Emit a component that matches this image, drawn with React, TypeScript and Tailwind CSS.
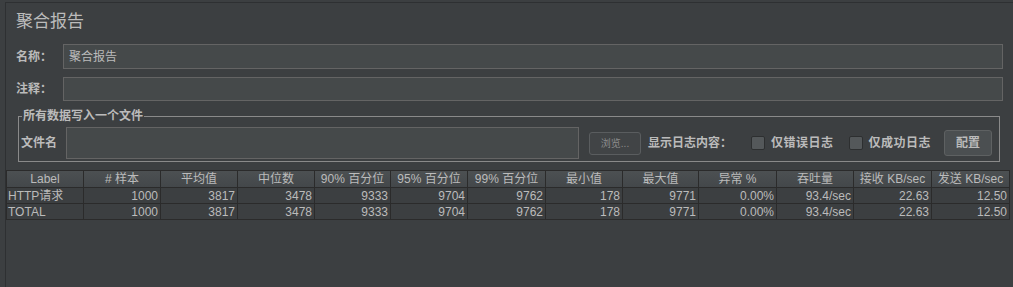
import React from 'react';

const cols = [
  { label: 'Label', w: 77 },
  { label: '# 样本', w: 77 },
  { label: '平均值', w: 77 },
  { label: '中位数', w: 77 },
  { label: '90% 百分位', w: 76 },
  { label: '95% 百分位', w: 77 },
  { label: '99% 百分位', w: 78 },
  { label: '最小值', w: 77 },
  { label: '最大值', w: 76 },
  { label: '异常 %', w: 78 },
  { label: '吞吐量', w: 77 },
  { label: '接收 KB/sec', w: 78 },
  { label: '发送 KB/sec', w: 78 },
];

const rows = [
  ['HTTP请求', '1000', '3817', '3478', '9333', '9704', '9762', '178', '9771', '0.00%', '93.4/sec', '22.63', '12.50'],
  ['TOTAL', '1000', '3817', '3478', '9333', '9704', '9762', '178', '9771', '0.00%', '93.4/sec', '22.63', '12.50'],
];

const font = { fontFamily: '"Liberation Sans", "Noto Sans CJK SC", sans-serif' };

const Checkbox: React.FC<{ label: string }> = ({ label }) => (
  <label className="flex items-center gap-[6px] text-[12px] font-bold text-[#bbbbbb] tracking-[0.5px]">
    <span className="w-[14px] h-[14px] rounded-[2px] border border-[#2d2f30] bg-[#54585a]" />
    {label}
  </label>
);

const App: React.FC = () => {
  return (
    <div className="w-[1013px] h-[287px] bg-[#3c3f41] overflow-hidden pt-[2px] pl-[5px]" style={font}>
      <div className="h-full flex flex-col border-l border-t border-[#2e3032]">
        <div className="mt-[9px] pl-[10px] text-[17px] leading-[20px] text-[#bbbbbb]">聚合报告</div>

        <div className="mt-[12px] flex items-center pl-[10px] pr-[10px]">
          <span className="w-[47px] text-[12px] font-bold text-[#bbbbbb]">名称：</span>
          <div className="flex-1 h-[25px] border border-[#646464] bg-[#45494a] px-[5px] flex items-center text-[12px] text-[#bbbbbb]">
            聚合报告
          </div>
        </div>

        <div className="mt-[8px] flex items-center pl-[10px] pr-[10px]">
          <span className="w-[47px] text-[12px] font-bold text-[#bbbbbb]">注释：</span>
          <div className="flex-1 h-[24px] border border-[#646464] bg-[#45494a]" />
        </div>

        <fieldset className="mt-[7px] ml-[12px] mr-[13px] border border-[#8a8a8a] px-[2px] pt-[3px] pb-[2px]">
          <legend className="ml-[1px] px-[1px] text-[12px] leading-[16px] font-bold text-[#bbbbbb]">所有数据写入一个文件</legend>
          <div className="flex items-center">
            <span className="w-[45px] text-[12px] font-bold text-[#bbbbbb]">文件名</span>
            <div className="w-[513px] h-[32px] border border-[#646464] bg-[#45494a]" />
            <button className="ml-[10px] w-[52px] h-[23px] rounded-[3px] border border-[#5a5d5f] bg-[#414446] text-[10px] text-[#8c8c8c]">
              浏览...
            </button>
            <span className="ml-[7px] text-[12px] font-bold text-[#bbbbbb]">显示日志内容：</span>
            <div className="ml-[19px]">
              <Checkbox label="仅错误日志" />
            </div>
            <div className="ml-[15px]">
              <Checkbox label="仅成功日志" />
            </div>
            <button className="ml-auto mr-[5px] w-[48px] h-[26px] rounded-[3px] border border-[#5e6162] bg-[#4b4f51] text-[12px] font-bold text-[#bbbbbb]">
              配置
            </button>
          </div>
        </fieldset>

        <div className="mt-[8px] mr-[3px] flex-1">
          <table className="table-fixed border-collapse w-[1003px] text-[12px] text-[#bbbbbb]">
            <colgroup>
              {cols.map((c) => (
                <col key={c.label} style={{ width: c.w }} />
              ))}
            </colgroup>
            <thead>
              <tr className="h-[17px] bg-gradient-to-b from-[#4c5052] to-[#43474a]">
                {cols.map((c) => (
                  <th
                    key={c.label}
                    className="border border-[#2b2b2b] font-normal text-center leading-[15px] p-0 whitespace-nowrap overflow-hidden"
                  >
                    {c.label}
                  </th>
                ))}
              </tr>
            </thead>
            <tbody>
              {rows.map((r) => (
                <tr key={r[0]} className="h-[16px]">
                  {r.map((v, i) => (
                    <td
                      key={i}
                      className={`border border-[#2b2b2b] leading-[14px] py-0 whitespace-nowrap overflow-hidden ${
                        i === 0 ? 'text-left pl-[1px]' : 'text-right pr-[2px]'
                      }`}
                    >
                      {v}
                    </td>
                  ))}
                </tr>
              ))}
            </tbody>
          </table>
        </div>
      </div>
    </div>
  );
};

export default App;
